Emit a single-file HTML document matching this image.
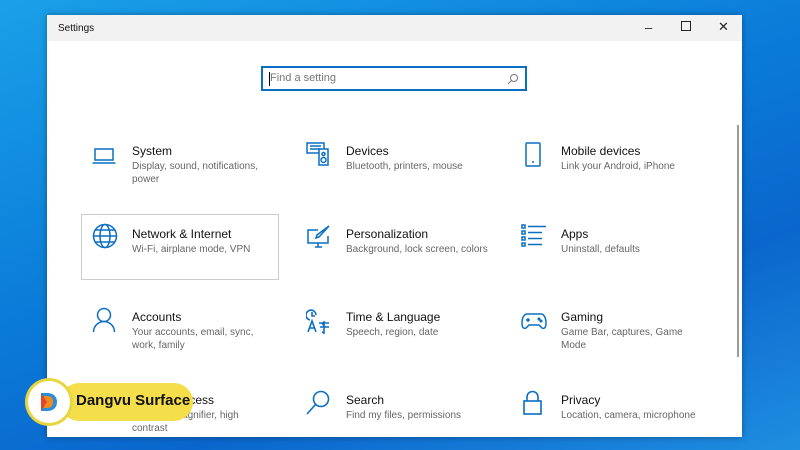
<!DOCTYPE html>
<html><head><meta charset="utf-8"><style>
*{margin:0;padding:0;box-sizing:border-box}
body{width:800px;height:450px;overflow:hidden;position:relative;font-family:"Segoe UI","Liberation Sans",sans-serif;
background:linear-gradient(160deg,#1aa0e8 0%,#0a7ad8 45%,#0a66cc 70%,#1f8ee0 100%);}
.win{position:absolute;left:47px;top:15px;width:695px;height:422px;background:#fff;box-shadow:0 0 6px rgba(0,0,0,.35)}
.tb{height:26px;background:#f2f2f2;font-size:10px;color:#111;padding:8px 0 0 11px;position:relative}
.ctl{position:absolute;top:5px;font-size:13px;color:#222}
.search{position:absolute;left:214px;top:51px;width:266px;height:25px;border:2px solid #0a6fc2;font-size:11px;color:#777;padding:4px 0 0 7px}
.search:before{content:"";position:absolute;left:6px;top:4px;width:1px;height:14px;background:#000}
.it{position:absolute}
.it svg{position:absolute;left:0;top:0}
.t{position:absolute;font-size:12px;color:#111;white-space:nowrap}
.d{position:absolute;font-size:10px;color:#666;line-height:13px;width:135px}
.sel{position:absolute;left:34px;top:199px;width:198px;height:66px;border:1px solid #ccc}
.sb{position:absolute;left:690px;top:110px;width:2px;height:232px;background:#9a9a9a}
.badge{position:absolute;left:60px;top:383px;width:133px;height:38px;background:#f4de4a;border-radius:19px}
.badge span{position:absolute;left:16px;top:9px;font:bold 15px "Liberation Sans",sans-serif;color:#111}
.circ{position:absolute;left:28px;top:381px;width:42px;height:42px;border-radius:50%;background:#fff;box-shadow:0 0 0 3px #e8d640}
</style></head><body>
<div class="win">
<div class="tb">Settings
<span class="ctl" style="left:598px">&#8211;</span>
<span class="ctl" style="left:634px;top:6px;width:10px;height:10px;border:1px solid #222"></span>
<span class="ctl" style="left:671px;top:4px">&#10005;</span></div>
<div class="search">Find a setting<svg style="position:absolute;right:6px;top:5px" width="12" height="12" viewBox="0 0 12 12"><circle cx="7" cy="5" r="3.5" fill="none" stroke="#777"/><path d="M4.5 7.5 1 11" stroke="#777"/></svg></div>
<div class="sel"></div>
<div class="sb"></div>
<!-- row1 -->
<svg style="position:absolute;left:45px;top:131px" width="24" height="20" viewBox="0 0 24 20" fill="none" stroke="#0a6fc2" stroke-width="1.5"><rect x="3" y="3" width="18" height="11"/><path d="M0.5 17h23"/></svg>
<div class="t" style="left:85px;top:129px">System</div><div class="d" style="left:85px;top:145px">Display, sound, notifications, power</div>
<svg style="position:absolute;left:259px;top:126px" width="26" height="26" viewBox="0 0 26 26" fill="none" stroke="#0a6fc2" stroke-width="1.5"><rect x="1" y="2" width="17" height="10"/><path d="M4 5h11M4 8h11"/><rect x="13" y="8" width="9" height="16" fill="#fff"/><circle cx="17.5" cy="13" r="1.5"/><circle cx="17.5" cy="19" r="2.5"/></svg>
<div class="t" style="left:299px;top:129px">Devices</div><div class="d" style="left:299px;top:145px;width:200px">Bluetooth, printers, mouse</div>
<svg style="position:absolute;left:477px;top:127px" width="18" height="26" viewBox="0 0 18 26" fill="none" stroke="#0a6fc2" stroke-width="1.5"><rect x="2" y="1" width="14" height="23" rx="1"/><path d="M8 20h2"/></svg>
<div class="t" style="left:514px;top:129px">Mobile devices</div><div class="d" style="left:514px;top:145px;width:200px">Link your Android, iPhone</div>
<!-- row2 -->
<svg style="position:absolute;left:45px;top:208px" width="26" height="26" viewBox="0 0 26 26" fill="none" stroke="#0a6fc2" stroke-width="1.5"><circle cx="13" cy="13" r="11.5"/><ellipse cx="13" cy="13" rx="5" ry="11.5"/><path d="M1.5 13h23M3.5 7h19M3.5 19h19"/></svg>
<div class="t" style="left:85px;top:212px">Network &amp; Internet</div><div class="d" style="left:85px;top:228px;width:200px">Wi-Fi, airplane mode, VPN</div>
<svg style="position:absolute;left:259px;top:209px" width="26" height="26" viewBox="0 0 26 26" fill="none" stroke="#0a6fc2" stroke-width="1.5"><path d="M12 6H2v13h20v-7"/><path d="M9 23h7M12 19v4"/><path d="M23 2l-10 11-3 1 1-3z"/></svg>
<div class="t" style="left:299px;top:212px">Personalization</div><div class="d" style="left:299px;top:228px;width:200px">Background, lock screen, colors</div>
<svg style="position:absolute;left:474px;top:209px" width="26" height="26" viewBox="0 0 26 26" fill="none" stroke="#0a6fc2" stroke-width="1.5"><rect x="1" y="1" width="3" height="3"/><rect x="1" y="7" width="3" height="3"/><rect x="1" y="13" width="3" height="3"/><rect x="1" y="19" width="3" height="3"/><path d="M7 2.5h18M7 8.5h14M7 14.5h14M7 20.5h14"/></svg>
<div class="t" style="left:514px;top:212px">Apps</div><div class="d" style="left:514px;top:228px;width:200px">Uninstall, defaults</div>
<!-- row3 -->
<svg style="position:absolute;left:45px;top:292px" width="24" height="26" viewBox="0 0 24 26" fill="none" stroke="#0a6fc2" stroke-width="1.5"><circle cx="12" cy="8" r="6.5"/><path d="M1.5 25a10.5 10.5 0 0 1 21 0"/></svg>
<div class="t" style="left:85px;top:295px">Accounts</div><div class="d" style="left:85px;top:311px">Your accounts, email, sync, work, family</div>
<svg style="position:absolute;left:259px;top:293px" width="26" height="26" viewBox="0 0 26 26" fill="none" stroke="#0a6fc2" stroke-width="1.6"><path d="M10 7a5 5 0 1 0-6 5"/><path d="M6 4v4h3"/><path d="M2 24l4-11 4 11M3.5 20h5"/><path d="M13 15h10M18 13v12l-2-1M14 19h9M16 15l2 3"/></svg>
<div class="t" style="left:299px;top:295px">Time &amp; Language</div><div class="d" style="left:299px;top:311px;width:200px">Speech, region, date</div>
<svg style="position:absolute;left:474px;top:296px" width="26" height="20" viewBox="0 0 26 20" fill="none" stroke="#0a6fc2" stroke-width="1.5"><path d="M6 3h14c3 0 5 4 5 9s-2 6-4 5l-3-3H8l-3 3c-2 1-4 0-4-5s2-9 5-9z"/><path d="M5 9h4M7 7v4"/><circle cx="18" cy="8" r=".8"/><circle cx="20" cy="10" r=".8"/></svg>
<div class="t" style="left:514px;top:295px">Gaming</div><div class="d" style="left:514px;top:311px">Game Bar, captures, Game Mode</div>
<!-- row4 -->
<div class="t" style="left:85px;top:378px">Ease of Access</div><div class="d" style="left:85px;top:394px">Narrator, magnifier, high contrast</div>
<svg style="position:absolute;left:259px;top:375px" width="26" height="26" viewBox="0 0 26 26" fill="none" stroke="#0a6fc2" stroke-width="1.6"><circle cx="15" cy="9" r="7.5"/><path d="M9.5 14.5 1 24"/></svg>
<div class="t" style="left:299px;top:378px">Search</div><div class="d" style="left:299px;top:394px;width:200px">Find my files, permissions</div>
<svg style="position:absolute;left:475px;top:375px" width="22" height="26" viewBox="0 0 22 26" fill="none" stroke="#0a6fc2" stroke-width="1.6"><rect x="2" y="11" width="17" height="13"/><path d="M5 11V7a5.5 5.5 0 0 1 11 0v4"/></svg>
<div class="t" style="left:514px;top:378px">Privacy</div><div class="d" style="left:514px;top:394px;width:200px">Location, camera, microphone</div>
</div>
<div class="badge"><span>Dangvu Surface</span></div>
<div class="circ"><svg style="position:absolute;left:11px;top:10px" width="20" height="22" viewBox="0 0 20 22"><path d="M2 2h6c7 0 10 4 10 9s-3 9-10 9H2z" fill="#2a8fd8"/><path d="M5 5h3c4 0 6 2 6 6s-2 6-6 6H5z" fill="#f08a1c"/><path d="M2 2l6 9-6 9z" fill="#e2452b"/></svg></div>
</body></html>
